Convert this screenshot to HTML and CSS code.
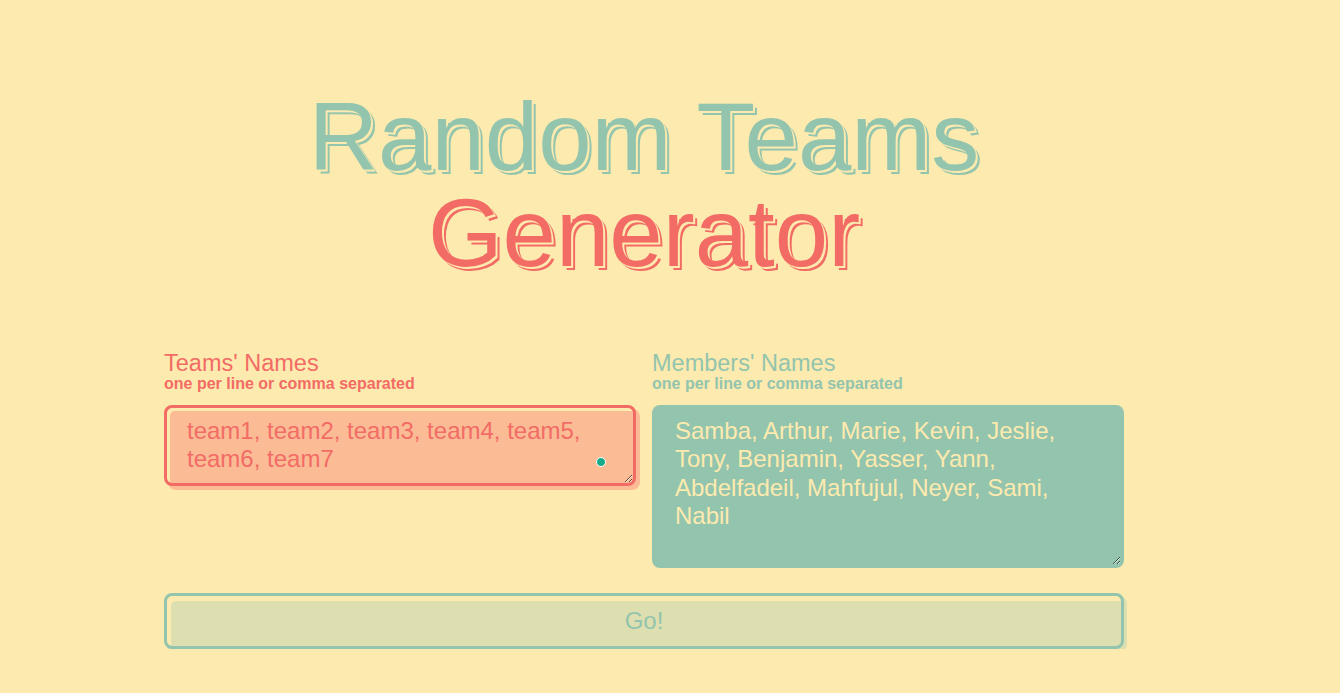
FILE: index.html
```html
<!DOCTYPE html>
<html lang="en">
<head>
<meta charset="utf-8">
<title>Random Teams Generator</title>
<link rel="stylesheet" href="styles.css">
</head>
<body>
<main class="page">
  <h1 class="title">
    <span class="title-top">Random Teams</span>
    <span class="title-bottom">Generator</span>
  </h1>
  <div class="fields">
    <div class="field field-teams">
      <label class="label" for="teams">Teams' Names</label>
      <span class="hint">one per line or comma separated</span>
      <div class="input-wrap">
        <textarea id="teams" class="input input-teams" placeholder="team1, team2, team3, team4, team5, team6, team7"></textarea>
        <span class="ext-dot"></span>
      </div>
    </div>
    <div class="field field-members">
      <label class="label" for="members">Members' Names</label>
      <span class="hint">one per line or comma separated</span>
      <div class="input-wrap">
        <textarea id="members" class="input input-members">Samba, Arthur, Marie, Kevin, Jeslie, Tony, Benjamin, Yasser, Yann, Abdelfadeil, Mahfujul, Neyer, Sami, Nabil</textarea>
      </div>
    </div>
  </div>
  <button class="go" type="button">Go!</button>
</main>
</body>
</html>
```

FILE: styles.css
```css
html, body {
  margin: 0;
  padding: 0;
  background: #fdeaaf;
  font-family: "Liberation Sans", Arial, Helvetica, sans-serif;
}

.page {
  width: 960px;
  margin-left: 164px;
  padding-top: 89px;
}

.title {
  margin: 0;
  font-size: 96px;
  line-height: 96px;
  font-weight: normal;
  text-align: center;
}

.title span {
  display: block;
}

.title-top {
  color: #93c4ad;
  text-shadow: 2px 2px 0 #fdeaaf, 4px 4px 0 #93c4ad;
}

.title-bottom {
  color: #f26c65;
  text-shadow: 2px 2px 0 #fdeaaf, 4px 4px 0 #f26c65;
}

.fields {
  display: grid;
  grid-template-columns: 1fr 1fr;
  column-gap: 16px;
  margin-top: 70px;
  align-items: start;
}

.field {
  display: flex;
  flex-direction: column;
}

.label {
  font-size: 23.5px;
  line-height: 24px;
}

.hint {
  font-size: 16px;
  line-height: 16px;
  font-weight: bold;
  margin-top: 1px;
}

.field-teams .label,
.field-teams .hint {
  color: #f26c65;
}

.field-members .label,
.field-members .hint {
  color: #93c4ad;
}

.input-wrap {
  position: relative;
  margin-top: 13px;
}

.input {
  display: block;
  width: 100%;
  box-sizing: border-box;
  margin: 0;
  padding: 9px 20px 8px;
  border-width: 3px;
  border-style: solid;
  border-radius: 8px;
  font-family: "Liberation Sans", Arial, Helvetica, sans-serif;
  font-size: 24px;
  line-height: 28.3px;
  outline: none;
}

.input-teams {
  height: 81px;
  border-color: #f26c65;
  background: #fbbb95;
  color: #f26c65;
  box-shadow: inset 3px 3px 0 #fdeaaf, 4px 4px 0 #fbbb95;
}

.input-teams::placeholder {
  color: #f26c65;
  opacity: 1;
}

.input-members {
  height: 163px;
  border-color: #93c4ad;
  background: #93c4ad;
  color: #fdeaaf;
}

.ext-dot {
  position: absolute;
  right: 30px;
  bottom: 19px;
  width: 8px;
  height: 8px;
  border-radius: 50%;
  background: #16ab88;
  border: 1px solid #ffffff;
}

.go {
  display: block;
  width: 100%;
  height: 56px;
  margin-top: 25px;
  padding: 0;
  box-sizing: border-box;
  border: 3px solid #93c4ad;
  border-radius: 8px;
  background: #dedfb0;
  box-shadow: inset 4px 5px 0 #fdeaaf, 3px 3px 0 #dedfb0;
  color: #93c4ad;
  font-family: "Liberation Sans", Arial, Helvetica, sans-serif;
  font-size: 24px;
  line-height: 1;
}
```
